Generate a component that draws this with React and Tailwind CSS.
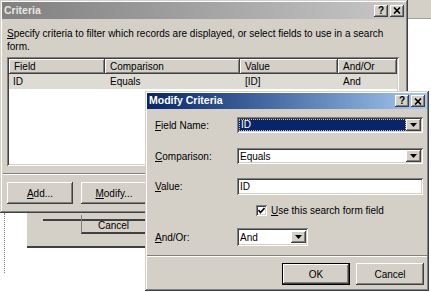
import React from "react";

const frame =
  "shadow-[inset_-1px_-1px_0_#404040,inset_1px_1px_0_#d4d0c8,inset_-2px_-2px_0_#808080,inset_2px_2px_0_#ffffff]";
const raised =
  "shadow-[inset_-1px_-1px_0_#404040,inset_1px_1px_0_#ffffff,inset_-2px_-2px_0_#808080,inset_2px_2px_0_#d4d0c8]";
const sunken =
  "shadow-[inset_1px_1px_0_#808080,inset_-1px_-1px_0_#ffffff,inset_2px_2px_0_#404040,inset_-2px_-2px_0_#d4d0c8]";

function TitleBtn({ children }) {
  return (
    <div className={`w-[14px] h-[12px] bg-[#d4d0c8] ${raised} flex items-center justify-center text-black font-bold text-[10px] leading-none`}>
      {children}
    </div>
  );
}

function CloseX() {
  return (
    <svg width="8" height="7" viewBox="0 0 8 7">
      <path d="M1 0.5 L7 6.5 M7 0.5 L1 6.5" stroke="#000" strokeWidth="1.6" />
    </svg>
  );
}

function Arrow() {
  return (
    <div className={`w-[15px] h-[12px] bg-[#d4d0c8] ${raised} flex items-center justify-center`}>
      <svg width="7" height="4" viewBox="0 0 7 4">
        <path d="M0 0 H7 L3.5 4 Z" fill="#000" />
      </svg>
    </div>
  );
}

function Btn({ children, className = "" }) {
  return (
    <div className={`h-[22px] bg-[#d4d0c8] ${raised} flex items-center justify-center ${className}`}>
      {children}
    </div>
  );
}

const U = ({ children }) => <span className="underline underline-offset-[1px]">{children}</span>;

export default function App() {
  return (
    <div className="relative w-[431px] h-[292px] bg-white overflow-hidden font-['Liberation_Sans',Arial,sans-serif] text-[10px] text-black">
      {/* top-right stray window piece */}
      <div className="absolute left-[406px] top-0 w-[25px] h-[19px] bg-[#d4d0c8] border-b border-[#a0a0a0]" />

      {/* dotted line */}
      <div className="absolute left-[4px] top-[213px] h-[60px] border-l border-dotted border-[#808080]" />

      {/* window behind */}
      <div className="absolute left-[27px] top-[205px] w-[130px] h-[43px] bg-[#d4d0c8] border-b-2 border-[#404040]">
        <div className="absolute left-[16px] top-[14px] right-0 border-t-2 border-[#404040]" />
        <div className="absolute left-[54px] top-[10px] right-0 h-[19px] border-l border-[#808080] border-b-2 border-b-[#404040] flex items-end justify-center pb-[1px] pr-[12px]">
          <span className="leading-[11px]">Cancel</span>
        </div>
      </div>

      {/* Criteria dialog */}
      <div className={`absolute left-0 top-0 w-[408px] h-[213px] bg-[#d4d0c8] ${frame} p-[2px] flex flex-col`}>
        <div className="h-[17px] flex items-center justify-between bg-gradient-to-r from-[#808080] to-[#c8c8c8] pl-[2px] pr-[2px]">
          <span className="font-bold text-[#e8e6e0] text-[10.5px]">Criteria</span>
          <div className="flex gap-[2px]">
            <TitleBtn>?</TitleBtn>
            <TitleBtn>
              <CloseX />
            </TitleBtn>
          </div>
        </div>
        <p className="mt-[8px] ml-[5px] leading-[13px]">
          <U>S</U>pecify criteria to filter which records are displayed, or select fields to use in a search
          <br />
          form.
        </p>
        <div className={`mt-[4px] ml-[5px] w-[392px] h-[109px] bg-white ${sunken} p-[2px]`}>
          <div className="flex h-[15px] leading-[15px]">
            <div className={`w-[96px] bg-[#d4d0c8] ${raised} pl-[5px]`}>Field</div>
            <div className={`w-[135px] bg-[#d4d0c8] ${raised} pl-[5px]`}>Comparison</div>
            <div className={`w-[98px] bg-[#d4d0c8] ${raised} pl-[5px]`}>Value</div>
            <div className={`w-[59px] bg-[#d4d0c8] ${raised} pl-[5px]`}>And/Or</div>
          </div>
          <div className="flex h-[15px] leading-[15px] bg-[#dedbd4] w-[388px]">
            <div className="w-[96px] pl-[4px]">ID</div>
            <div className="w-[135px] pl-[5px]">Equals</div>
            <div className="w-[98px] pl-[5px]">[ID]</div>
            <div className="w-[59px] pl-[5px]">And</div>
          </div>
        </div>
        <div className="mt-[7px] mx-[1px] border-t border-[#808080] border-b border-b-white" />
        <div className="mt-[7px] ml-[5px] flex gap-[8px]">
          <Btn className="w-[66px]">
            <span>
              <U>A</U>dd...
            </span>
          </Btn>
          <Btn className="w-[66px]">
            <span>
              <U>M</U>odify...
            </span>
          </Btn>
        </div>
      </div>

      {/* Modify Criteria dialog */}
      <div className={`absolute left-[145px] top-[91px] w-[284px] h-[200px] bg-[#d4d0c8] ${frame} p-[2px] flex flex-col`}>
        <div className="h-[16px] flex items-center justify-between bg-gradient-to-r from-[#0a246a] to-[#a6caf0] pl-[2px] pr-[2px]">
          <span className="font-bold text-white text-[10.5px]">Modify Criteria</span>
          <div className="flex gap-[2px]">
            <TitleBtn>?</TitleBtn>
            <TitleBtn>
              <CloseX />
            </TitleBtn>
          </div>
        </div>

        <div className="mt-[8px] flex items-center h-[16px]">
          <div className="w-[90px] pl-[8px]">
            <U>F</U>ield Name:
          </div>
          <div className={`w-[186px] h-[16px] bg-white ${sunken} p-[2px] flex items-center`}>
            <div className="flex-1 h-full bg-[#0a246a] text-white border border-dotted border-[#c0c0c0] pl-[1px] leading-[10px]">ID</div>
            <Arrow />
          </div>
        </div>

        <div className="mt-[15px] flex items-center h-[16px]">
          <div className="w-[90px] pl-[8px]">
            <U>C</U>omparison:
          </div>
          <div className={`w-[186px] h-[16px] bg-white ${sunken} p-[2px] flex items-center`}>
            <div className="flex-1 pl-[1px]">Equals</div>
            <Arrow />
          </div>
        </div>

        <div className="mt-[14px] flex items-center h-[17px]">
          <div className="w-[90px] pl-[8px]">
            <U>V</U>alue:
          </div>
          <div className={`w-[186px] h-[17px] bg-white ${sunken} pl-[3px] flex items-center`}>ID</div>
        </div>

        <div className="mt-[10px] flex items-center h-[11px] pl-[109px]">
          <div className={`w-[11px] h-[11px] bg-white ${sunken} flex items-center justify-center`}>
            <svg width="7" height="7" viewBox="0 0 7 7">
              <path d="M0.5 3 L2.5 5.5 L6.5 1" stroke="#000" strokeWidth="1.6" fill="none" />
            </svg>
          </div>
          <span className="ml-[4px]">
            <U>U</U>se this search form field
          </span>
        </div>

        <div className="mt-[12px] flex items-center h-[18px]">
          <div className="w-[90px] pl-[8px]">
            <U>A</U>nd/Or:
          </div>
          <div className={`w-[71px] h-[18px] bg-white ${sunken} p-[2px] flex items-center`}>
            <div className="flex-1 pl-[1px]">And</div>
            <Arrow />
          </div>
        </div>

        <div className="mt-[9px] border-t border-[#808080] border-b border-b-white" />

        <div className="mt-[6px] flex justify-end gap-[6px] pr-[3px]">
          <div className="w-[68px] h-[22px] border border-black">
            <Btn className="w-full h-full">OK</Btn>
          </div>
          <Btn className="w-[68px]">Cancel</Btn>
        </div>
      </div>
    </div>
  );
}
